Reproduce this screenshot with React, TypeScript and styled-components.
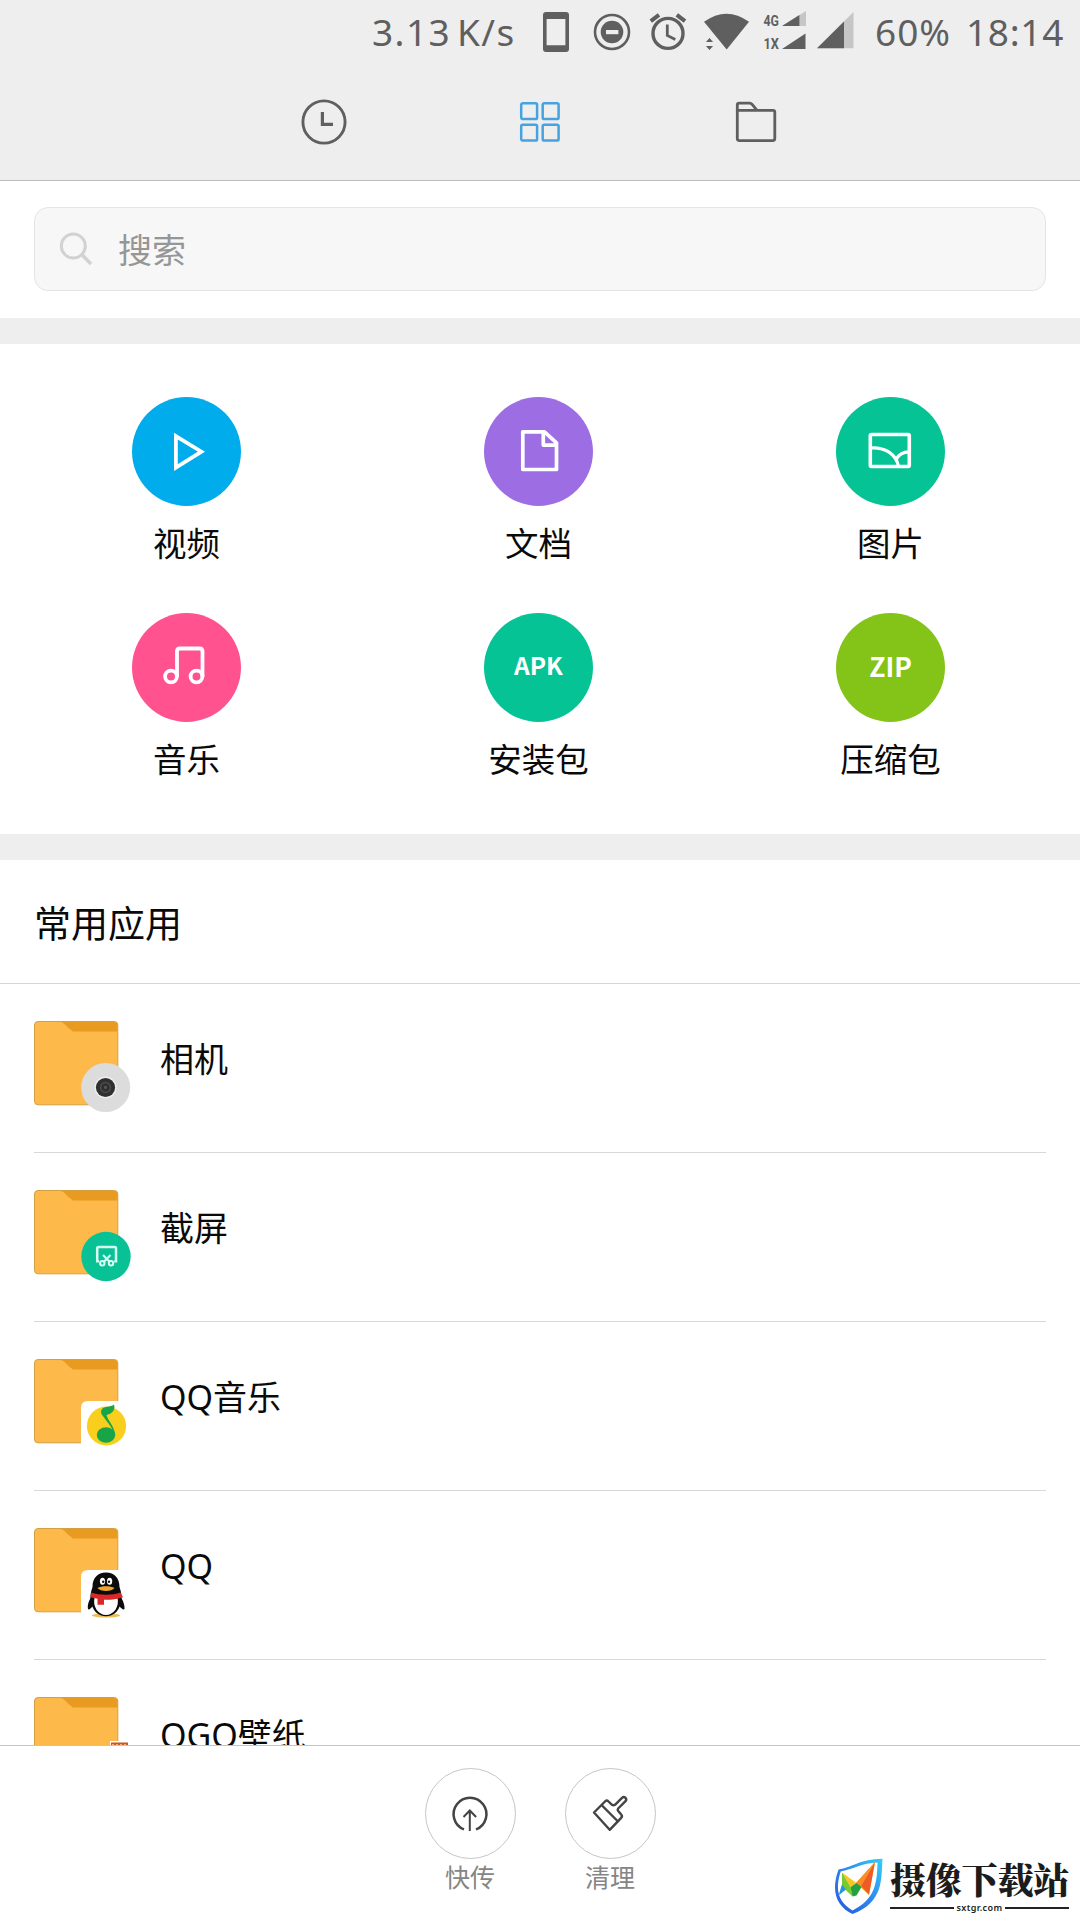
import React from "react";
import styled, { createGlobalStyle } from "styled-components";

const GlobalStyle = createGlobalStyle`
  * { box-sizing: border-box; }
  html, body { margin: 0; padding: 0; background: #fff; }
  body {
    font-family: "Noto Sans", "Noto Sans CJK SC", sans-serif;
    color: #0a0a0a;
    overflow: hidden;
  }
  svg { display: block; flex: none; }
`;

const INK = "#5f5f5f";

const Screen = styled.main`
  position: relative;
  display: flex;
  flex-direction: column;
  width: 1080px;
  height: 1920px;
  background: #fff;
  overflow: hidden;
`;

const Header = styled.header`
  height: 181px;
  flex: none;
  background: #eeeeee;
  border-bottom: 1px solid #bcbcbc;
`;

const StatusBar = styled.div`
  display: flex;
  align-items: flex-start;
  height: 66px;
  padding-left: 372px;
`;

const StatusText = styled.span<{ $width: number; $gap?: number; $spacing?: number }>`
  flex: none;
  width: ${(p) => p.$width}px;
  margin-left: ${(p) => p.$gap ?? 0}px;
  letter-spacing: ${(p) => p.$spacing ?? 0}px;
  word-spacing: -5px;
  color: ${INK};
  font-size: 37px;
  line-height: 50px;
  padding-top: 7px;
  white-space: pre;
`;

const StatusIcon = styled.span<{ $gap: number; $top: number }>`
  flex: none;
  margin-left: ${(p) => p.$gap}px;
  margin-top: ${(p) => p.$top}px;
`;

const Tabs = styled.nav`
  display: flex;
  justify-content: center;
  height: 112px;
`;

const Tab = styled.button`
  width: 216px;
  height: 112px;
  padding: 0;
  border: 0;
  background: none;
  display: flex;
  align-items: center;
  justify-content: center;
`;

const SearchArea = styled.section`
  flex: none;
  height: 137px;
  padding: 26px 34px 0;
`;

const SearchBox = styled.div`
  display: flex;
  align-items: center;
  height: 84px;
  padding-left: 24px;
  gap: 25px;
  background: #f7f7f7;
  border: 1px solid #e4e4e4;
  border-radius: 14px;
  color: #969696;
  font-size: 34px;
  line-height: 50px;
`;

const SearchHint = styled.span`
  padding-top: 2px;
`;

const Band = styled.div`
  flex: none;
  height: 26px;
  background: #eeeeee;
`;

const CategoryGrid = styled.section`
  flex: none;
  display: grid;
  grid-template-columns: repeat(3, 352px);
  grid-auto-rows: 216px;
  height: 490px;
  padding: 53px 0 0 10px;
`;

const Category = styled.div`
  display: flex;
  flex-direction: column;
  align-items: center;
`;

const Disc = styled.div<{ $color: string }>`
  display: flex;
  align-items: center;
  justify-content: center;
  width: 109px;
  height: 109px;
  border-radius: 50%;
  background: ${(p) => p.$color};
`;

const DiscText = styled.span<{ $size: number; $shift: number }>`
  color: #fff;
  font-family: "Noto Sans CJK SC", sans-serif;
  font-weight: 700;
  font-size: ${(p) => p.$size}px;
  line-height: 30px;
  padding-left: 1px;
  padding-bottom: ${(p) => p.$shift}px;
`;

const CategoryLabel = styled.span`
  margin-top: 12px;
  padding-left: 1px;
  font-size: 33.5px;
  line-height: 50px;
`;

const SectionTitle = styled.h2`
  flex: none;
  margin: 0;
  height: 124px;
  padding: 37px 0 0 34px;
  font-size: 37px;
  font-weight: 400;
  line-height: 54px;
  border-bottom: 1px solid #d6d6d6;
`;

const AppList = styled.section`
  flex: 1 1 0;
  min-height: 0;
  overflow: hidden;
  padding: 0 34px;
`;

const AppRow = styled.div`
  display: flex;
  height: 169px;
  padding-top: 37px;
  gap: 24px;
  border-bottom: 1px solid #d8d8d8;
`;

const AppName = styled.span`
  font-size: 34px;
  line-height: 50px;
  padding-top: 13px;
`;

const BottomBar = styled.footer`
  flex: none;
  display: flex;
  justify-content: center;
  gap: 48px;
  height: 175px;
  padding-top: 22px;
  border-top: 1px solid #c4c4c4;
  background: #fff;
`;

const Action = styled.div`
  display: flex;
  flex-direction: column;
  align-items: center;
  width: 92px;
`;

const ActionCircle = styled.div`
  display: flex;
  align-items: center;
  justify-content: center;
  width: 91px;
  height: 91px;
  border: 1px solid #c6c6c6;
  border-radius: 50%;
`;

const ActionLabel = styled.span`
  font-size: 25px;
  line-height: 36px;
  color: #858585;
`;

const Watermark = styled.div`
  position: absolute;
  left: 833px;
  top: 1857px;
  display: flex;
  gap: 7px;
`;

const WatermarkBody = styled.div`
  display: flex;
  flex-direction: column;
  width: 179px;
`;

const WatermarkName = styled.span`
  font-family: "Noto Serif CJK SC", "Noto Sans CJK SC", serif;
  font-weight: 900;
  font-size: 36px;
  line-height: 43px;
  letter-spacing: -0.2px;
  color: #1c1c1c;
  white-space: nowrap;
`;

const WatermarkSite = styled.span`
  display: flex;
  align-items: center;
  gap: 2px;
  height: 16px;
  font-size: 9px;
  font-weight: 600;
  line-height: 14px;
  letter-spacing: 0.4px;
  color: #222;
  &::before, &::after {
    content: "";
    flex: 1;
    height: 2px;
    background: #222;
  }
`;

const PhoneIcon = () => (
  <svg width="26" height="40" viewBox="543 12 26 40">
    <path fill={INK} fillRule="evenodd" d="M546 12h20a3 3 0 0 1 3 3v34a3 3 0 0 1-3 3h-20a3 3 0 0 1-3-3V15a3 3 0 0 1 3-3zM546.6 19v26.3h18.8V19z" />
  </svg>
);

const DisturbIcon = () => (
  <svg width="38" height="38" viewBox="593 13 38 38">
    <circle cx="612" cy="32" r="17" fill="none" stroke={INK} strokeWidth="2.6" />
    <circle cx="612" cy="32" r="11.3" fill={INK} />
    <rect x="606" y="30" width="12.4" height="4.2" fill="#eee" />
  </svg>
);

const AlarmIcon = () => (
  <svg width="38" height="40" viewBox="649 12 38 40" fill="none" stroke={INK}>
    <circle cx="668" cy="33.4" r="15" strokeWidth="3.4" />
    <path d="M650.8 21.2l8.2-6.4M676.8 14.8l8.2 6.4" strokeWidth="4" />
    <path d="M667.3 24.5v11l8 4" strokeWidth="2.8" />
  </svg>
);

const WifiIcon = () => (
  <svg width="46" height="40" viewBox="704 12 46 40" fill={INK}>
    <path d="M704 21.8Q726.5 5.6 749 21.8L726.7 49.5z" />
    <path d="M709.5 37.5l4.5 5h-9zM709.5 50.500l4.5-5h-9z" stroke="#eee" strokeWidth="1" />
  </svg>
);

const DualSignalIcon = () => (
  <svg width="43" height="40" viewBox="763 11 43 40">
    <g fill={INK} fontFamily="Roboto, sans-serif" fontWeight="700" fontSize="15">
      <text x="763.5" y="26.2" textLength="15.5" lengthAdjust="spacingAndGlyphs">4G</text>
      <text x="763.5" y="49.2" textLength="15.5" lengthAdjust="spacingAndGlyphs">1X</text>
    </g>
    <path fill="#c6c6c6" d="M782 26L806 11v15z" />
    <path fill={INK} d="M782 26l17.4-10.9V26zM782 49l23.5-15.5V49z" />
  </svg>
);

const SignalIcon = () => (
  <svg width="37" height="37" viewBox="817 12 37 37">
    <path fill="#c6c6c6" d="M817 48.3L853.5 12v36.3z" />
    <path fill={INK} d="M817 48.3L844 21.5v26.8z" />
  </svg>
);

const ClockIcon = () => (
  <svg width="46" height="46" viewBox="301 99 46 46" fill="none" stroke={INK}>
    <circle cx="324" cy="122" r="21.1" strokeWidth="2.9" />
    <path d="M322.4 112v12.3H333" strokeWidth="3.2" />
  </svg>
);

const GridIcon = () => (
  <svg width="42" height="42" viewBox="0 0 42 42" fill="none" stroke="#46a3df" strokeWidth="2.5">
    {[2.2, 23.7].map((x) =>
      [2.2, 23.7].map((y) => <rect key={`${x}-${y}`} x={x} y={y} width="15.9" height="15.9" rx="1.6" />)
    )}
  </svg>
);

const FolderTabIcon = () => (
  <svg width="42" height="42" viewBox="735 101 42 42" fill="none" stroke={INK} strokeWidth="2.8" strokeLinejoin="round">
    <path d="M737.3 110.3V105q0-1.8 1.8-1.8h10.5q1.5 0 2.3 1l5 6" />
    <path d="M737.3 110.3h35.7q1.8 0 1.8 1.8v26.5q0 2-2 2h-33.5q-2 0-2-2z" />
  </svg>
);

const SearchIcon = () => (
  <svg width="34" height="34" viewBox="59 231 34 34" fill="none" stroke="#d2d2d2">
    <circle cx="73.3" cy="245" r="12" strokeWidth="3" />
    <path d="M81.8 253.6l9.2 9.4" strokeWidth="3.6" />
  </svg>
);

const PlayIcon = () => (
  <svg width="109" height="109" viewBox="132 397 109 109" fill="none" stroke="#fff" strokeWidth="3.8">
    <path d="M175.9 436.2v31.4l25.5-15.9z" />
  </svg>
);

const DocIcon = () => (
  <svg width="109" height="109" viewBox="484 397 109 109" fill="none" stroke="#fff" strokeWidth="3.7" strokeLinejoin="round">
    <path d="M522.8 431.8h21.7l12 11v26.7h-33.700z" />
    <path d="M543.3 431.8v13.3h13.2" />
  </svg>
);

const ImageIcon = () => (
  <svg width="109" height="109" viewBox="836 397 109 109" fill="none" stroke="#fff" strokeWidth="3.6" strokeLinejoin="round">
    <rect x="870.3" y="434.5" width="39" height="32" rx="1.2" />
    <path d="M870.3 448c15-1 25.500 6 28.3 18.500M896 459.500c2.500-5 7-7.700 13.300-7.700" strokeWidth="3.2" />
  </svg>
);

const MusicIcon = () => (
  <svg width="109" height="109" viewBox="132 613 109 109" fill="none" stroke="#fff" strokeWidth="3.8">
    <circle cx="171" cy="676.5" r="5.9" />
    <circle cx="196.500" cy="676.5" r="5.9" />
    <path d="M177 677v-25.7q0-2.800 2.800-2.800h19.900q2.800 0 2.800 2.800V677" />
  </svg>
);

type BadgeKind = "camera" | "shot" | "music" | "qq" | "wallpaper";

const Badge = ({ kind }: { kind: BadgeKind }) => {
  switch (kind) {
    case "camera":
      return (
        <g>
          <circle cx="71.7" cy="66.5" r="24.5" fill="#dcdcdc" />
          <circle cx="71.5" cy="66.5" r="11" fill="#eee" />
          <circle cx="71.5" cy="66.5" r="9.6" fill="#303030" />
          <circle cx="71.5" cy="66.5" r="5" fill="none" stroke="#4c4c4c" strokeWidth="1.5" />
          <circle cx="71.5" cy="66.5" r="1.4" fill="#5c5c5c" />
        </g>
      );
    case "shot":
      return (
        <g fill="none" stroke="#d4fff3" strokeWidth="2">
          <circle cx="72" cy="66.5" r="24.7" fill="#08c195" stroke="none" />
          <path d="M65 71.200h-1.800V58.6q0-1.500 1.500-1.500H80.500q1.500 0 1.500 1.500V71.200h-1.800" strokeWidth="2.5" />
          <path d="M69 65l7 7.3M76.500 65l-7 7.3" strokeWidth="2.100" />
          <circle cx="68.3" cy="73.3" r="2.2" strokeWidth="2" />
          <circle cx="77" cy="73.3" r="2.2" strokeWidth="2" />
        </g>
      );
    case "music":
      return (
        <g>
          <path d="M47 91V49q0-7 7-7h42v49z" fill="#fff" />
          <circle cx="72.5" cy="67" r="19.6" fill="#f8cf1c" />
          <ellipse cx="72" cy="76" rx="9.2" ry="7.8" fill="#17a548" />
          <path d="M80 77c0-7-6-13-11.500-20.500-3-4.500-1-7.500 3.500-8.500 4-.8 6.500-.8 8-2.500 1.500 5-1 9-7.500 10.500 1 5 8.700 12 8.800 21z" fill="#17a548" />
        </g>
      );
    case "qq":
      return (
        <g>
          <path d="M47 91V49q0-7 7-7h42v49z" fill="#fff" />
          <ellipse cx="72" cy="87.500" rx="14" ry="2" fill="#ecbd55" />
          <path d="M59 67c-3 3-6 9-5 14 1 1.500 3-1 5-3zM85 67c3 3 6 9 5.500 14-1 1.500-3.500-1-5.500-3z" fill="#0b0b0b" />
          <path d="M58.500 59c0-9 5-14.500 13.500-14.500S85.500 50 85.500 59c2 6 3 11 1 17-2 8-8 12.300-14.500 12.300S59.500 84 57.500 76c-2-6-1-11 1-17z" fill="#0b0b0b" />
          <path d="M60.500 70h23c2 9-4 17-11.500 17s-13.500-8-11.500-17z" fill="#fff" />
          <ellipse cx="68.5" cy="53.3" rx="2.600" ry="3.500" fill="#fff" />
          <ellipse cx="75.6" cy="53.3" rx="2.600" ry="3.500" fill="#fff" />
          <circle cx="69.2" cy="53.700" r="1.200" fill="#111" />
          <circle cx="75" cy="53.700" r="1.200" fill="#111" />
          <path d="M63.500 60c4-2.500 13-2.500 17 0-3 4-14 4-17 0z" fill="#eda72c" />
          <path d="M57.500 64.500c8 3 21 3 29 0l2.500 4.700c-8 2.500-14 2.800-19 2.500v5h-6.500v-6l-7-1.500z" fill="#db2727" />
        </g>
      );
    case "wallpaper":
      return (
        <g>
          <rect x="76" y="44" width="18" height="18" fill="#fff" />
          <rect x="77" y="45.500" width="17" height="16" fill="#c85627" />
          <path d="M78 47.500h15" stroke="#efb183" strokeWidth="1" strokeDasharray="2 2" />
        </g>
      );
  }
};

const FolderIcon = ({ kind }: { kind: BadgeKind }) => (
  <svg width="102" height="94" viewBox="0 0 102 94">
    <rect x="0.5" y="0.5" width="83.3" height="83.3" rx="3.5" fill="#fdb94a" stroke="#d3a043" strokeWidth="1" />
    <path d="M27 1h53q3.300 0 3.300 3.300V10.500H39Q34 7 32 4.500 30 1.500 27 1z" fill="#e89b20" />
    <Badge kind={kind} />
  </svg>
);

const SendIcon = () => (
  <svg width="40" height="40" viewBox="450 1794 40 40" fill="none" stroke="#444">
    <path d="M464 1829.4a16.400 16.400 0 1 1 12 0" strokeWidth="2.500" />
    <path d="M469.800 1831v-20M463.500 1817l6.300-6.500 6.300 6.500" strokeWidth="2" />
  </svg>
);

const CleanIcon = () => (
  <svg width="40" height="40" viewBox="589 1793.500 40 40" fill="none" stroke="#444" strokeWidth="2.400" strokeLinejoin="round">
    <path d="M593 1812l11.500-11.500q1.500-1 3 .5l3.500 3.300q1.500 1 3 0l7-7q1.800-1.500 3.500 0 1.500 1.700 0 3.400l-7.300 7.300q-1 1.300 0 2.500l3 3.500q1.500 1.600 0 3.300l-11.500 12z" />
    <path d="M600.500 1804.500l17 17" />
  </svg>
);

const ShieldLogo = () => (
  <svg width="50" height="59" viewBox="833 1857 50 59">
    <defs>
      <linearGradient id="shield" x1="0" y1="1" x2="1" y2="0">
        <stop offset="0" stopColor="#2257dc" />
        <stop offset="0.5" stopColor="#2f86ee" />
        <stop offset="1" stopColor="#2fd0f7" />
      </linearGradient>
    </defs>
    <path fill="url(#shield)" fillRule="evenodd" d="M838.500 1869.500C852 1867.500 860 1859 882.500 1858.700C881 1878 884.500 1902 852.500 1914C838 1907 830 1893 838.500 1869.500zM840.700 1871.500C834 1892 840 1903 852.500 1910.500C875 1899 877 1884 877.500 1862.500C862 1863 852 1869.500 840.700 1871.500z" />
    <path fill="#f9a71f" d="M856 1883l19-21-6 33z" />
    <path fill="#ef5b24" d="M875 1862l-6 32.500-8-8.500z" />
    <path fill="#fa8d24" d="M875 1862l-14 24-5-3z" />
    <path fill="#f9c520" d="M842 1872.500l14.500 10.500-6 4z" />
    <path fill="#7ac92e" d="M842 1872.500l8.500 14.500 2 9.500-10.500-10z" />
    <path fill="#24a03e" d="M850.500 1887l6-4 5 4-5 8.500-4 1z" />
    <path fill="#2596d9" d="M842 1884.500l4 5-7.500 6z" />
  </svg>
);

const categories = [
  { label: "视频", color: "#00aceb", mark: <PlayIcon /> },
  { label: "文档", color: "#9d6de3", mark: <DocIcon /> },
  { label: "图片", color: "#05c395", mark: <ImageIcon /> },
  { label: "音乐", color: "#ff528f", mark: <MusicIcon /> },
  { label: "安装包", color: "#05c395", mark: <DiscText $size={24.5} $shift={5}>APK</DiscText> },
  { label: "压缩包", color: "#84c318", mark: <DiscText $size={26.5} $shift={3}>ZIP</DiscText> },
];

const apps: { name: string; kind: BadgeKind }[] = [
  { name: "相机", kind: "camera" },
  { name: "截屏", kind: "shot" },
  { name: "QQ音乐", kind: "music" },
  { name: "QQ", kind: "qq" },
  { name: "OGO壁纸", kind: "wallpaper" },
];

export default function App() {
  return (
    <Screen>
      <GlobalStyle />
      <Header>
        <StatusBar>
          <StatusText $width={145} $spacing={1.4}>3.13 K/s</StatusText>
          <StatusIcon $gap={26} $top={12}><PhoneIcon /></StatusIcon>
          <StatusIcon $gap={24} $top={13}><DisturbIcon /></StatusIcon>
          <StatusIcon $gap={18} $top={12}><AlarmIcon /></StatusIcon>
          <StatusIcon $gap={17} $top={12}><WifiIcon /></StatusIcon>
          <StatusIcon $gap={13} $top={11}><DualSignalIcon /></StatusIcon>
          <StatusIcon $gap={11} $top={12}><SignalIcon /></StatusIcon>
          <StatusText $width={78} $gap={21} $spacing={1}>60%</StatusText>
          <StatusText $width={100} $gap={13} $spacing={0.7}>18:14</StatusText>
        </StatusBar>
        <Tabs>
          <Tab><ClockIcon /></Tab>
          <Tab><GridIcon /></Tab>
          <Tab><FolderTabIcon /></Tab>
        </Tabs>
      </Header>

      <SearchArea>
        <SearchBox>
          <SearchIcon />
          <SearchHint>搜索</SearchHint>
        </SearchBox>
      </SearchArea>
      <Band />

      <CategoryGrid>
        {categories.map((c) => (
          <Category key={c.label}>
            <Disc $color={c.color}>{c.mark}</Disc>
            <CategoryLabel>{c.label}</CategoryLabel>
          </Category>
        ))}
      </CategoryGrid>
      <Band />

      <SectionTitle>常用应用</SectionTitle>
      <AppList>
        {apps.map((a) => (
          <AppRow key={a.name}>
            <FolderIcon kind={a.kind} />
            <AppName>{a.name}</AppName>
          </AppRow>
        ))}
      </AppList>

      <BottomBar>
        <Action>
          <ActionCircle><SendIcon /></ActionCircle>
          <ActionLabel>快传</ActionLabel>
        </Action>
        <Action>
          <ActionCircle><CleanIcon /></ActionCircle>
          <ActionLabel>清理</ActionLabel>
        </Action>
      </BottomBar>

      <Watermark>
        <ShieldLogo />
        <WatermarkBody>
          <WatermarkName>摄像下载站</WatermarkName>
          <WatermarkSite>sxtgr.com</WatermarkSite>
        </WatermarkBody>
      </Watermark>
    </Screen>
  );
}
